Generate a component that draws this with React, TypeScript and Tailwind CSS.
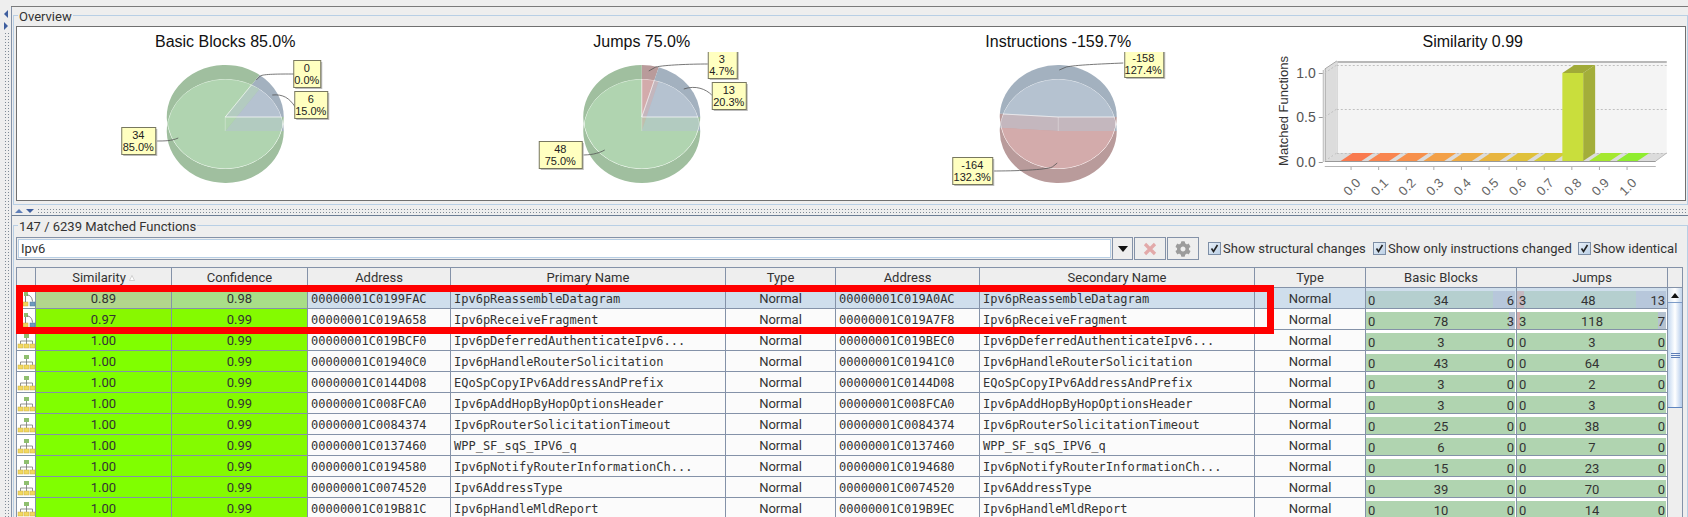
import { FaCog } from "react-icons/fa";

const SANS = "font-['Liberation_Sans',sans-serif]";

type Slice = { from: number; to: number; dark: string; pale: string };

const GREEN = { dark: "#a0bf9f", pale: "#b0d4b0" };
const BLUE = { dark: "#a3b1bf", pale: "#b5c2d0" };
const RED = { dark: "#b99b9b", pale: "#d3abab" };

const RX = 58.5;
const RY = 52;
const TOP = 117;
const BOTTOM = 131;

function wedge(cx: number, cy: number, from: number, to: number) {
  const rad = (a: number) => (a * Math.PI) / 180;
  const x0 = cx + RX * Math.cos(rad(from));
  const y0 = cy - RY * Math.sin(rad(from));
  const x1 = cx + RX * Math.cos(rad(to));
  const y1 = cy - RY * Math.sin(rad(to));
  const large = from - to > 180 ? 1 : 0;
  return `M${cx} ${cy}L${x0} ${y0}A${RX} ${RY} 0 ${large} 1 ${x1} ${y1}Z`;
}

function Note({ x, y, w, h, lines, cut }: { x: number; y: number; w: number; h: number; lines: string[]; cut?: boolean }) {
  const id = `note-${x}-${y}`;
  return (
    <g clipPath={cut ? `url(#${id})` : undefined}>
      {cut && (
        <clipPath id={id}>
          <rect x={x - 2} y={y + 3} width={w + 6} height={h + 4} />
        </clipPath>
      )}
      <rect x={x + 2} y={y + 2} width={w} height={h} fill="#bdbdbd" />
      <rect x={x + 0.5} y={y + 0.5} width={w} height={h} fill="#ffffc0" stroke="#77775f" />
      <text x={x + w / 2} y={y + 12} textAnchor="middle" className={`${SANS} fill-[#222] text-[11px]`}>
        {lines[0]}
      </text>
      <text x={x + w / 2} y={y + 24} textAnchor="middle" className={`${SANS} fill-[#222] text-[11px]`}>
        {lines[1]}
      </text>
    </g>
  );
}

function Pie({ id, cx, slices }: { id: string; cx: number; slices: Slice[] }) {
  return (
    <g>
      <clipPath id={`${id}-a`}>
        <ellipse cx={cx} cy={TOP} rx={RX} ry={RY} />
      </clipPath>
      <clipPath id={`${id}-b`}>
        <ellipse cx={cx} cy={BOTTOM} rx={RX} ry={RY} />
      </clipPath>
      {slices.map((s) => (
        <path key={`db${s.from}`} d={wedge(cx, BOTTOM, s.from, s.to)} fill={s.dark} />
      ))}
      {slices.map((s) => (
        <path key={`da${s.from}`} d={wedge(cx, TOP, s.from, s.to)} fill={s.dark} />
      ))}
      <g clipPath={`url(#${id}-a)`}>
        <g clipPath={`url(#${id}-b)`}>
          {slices.map((s) => (
            <path key={`pb${s.from}`} d={wedge(cx, BOTTOM, s.from, s.to)} fill={s.pale} />
          ))}
          {slices.map((s) => (
            <path key={`pa${s.from}`} d={wedge(cx, TOP, s.from, s.to)} fill={s.pale} fillOpacity={0.5} />
          ))}
          {slices.map((s) => (
            <path key={`la${s.from}`} d={wedge(cx, TOP, s.from, s.to)} fill="none" stroke="#fff" strokeOpacity={0.4} />
          ))}
          <line x1={cx} y1={TOP} x2={cx} y2={BOTTOM} stroke="#fff" strokeOpacity={0.3} />
          <ellipse cx={cx} cy={BOTTOM} rx={RX} ry={RY} fill="none" stroke="#fff" strokeOpacity={0.6} />
          <ellipse cx={cx} cy={TOP} rx={RX} ry={RY} fill="none" stroke="#fff" strokeOpacity={0.6} />
        </g>
      </g>
    </g>
  );
}

function ChartTitle({ x, children }: { x: number; children: string }) {
  return (
    <text x={x} y={47} textAnchor="middle" className={`${SANS} fill-[#111] text-[16px]`}>
      {children}
    </text>
  );
}

const leader = "none";

function BasicBlocksChart() {
  return (
    <svg viewBox="18 27 416.5 173" className="h-full w-full">
      <ChartTitle x={226}>Basic Blocks 85.0%</ChartTitle>
      <Pie
        id="bb"
        cx={226}
        slices={[
          { from: 54, to: 0, ...BLUE },
          { from: 0, to: -306, ...GREEN },
        ]}
      />
      <path d="M295 74C280 74 264 74 261 76L257 80" fill={leader} stroke="#555" strokeWidth={0.8} />
      <path d="M296 107C290 98 284 94 273 95" fill={leader} stroke="#555" strokeWidth={0.8} />
      <path d="M156 141C166 141 172 141 179 138" fill={leader} stroke="#555" strokeWidth={0.8} />
      <Note x={294} y={60} w={27} h={27} lines={["0", "0.0%"]} />
      <Note x={295} y={91} w={33} h={27} lines={["6", "15.0%"]} />
      <Note x={122} y={127} w={34} h={27} lines={["34", "85.0%"]} />
    </svg>
  );
}

function JumpsChart() {
  return (
    <svg viewBox="434.5 27 416.5 173" className="h-full w-full">
      <ChartTitle x={642}>Jumps 75.0%</ChartTitle>
      <Pie
        id="ju"
        cx={642}
        slices={[
          { from: 90, to: 73.1, ...RED },
          { from: 73.1, to: 0, ...BLUE },
          { from: 0, to: -270, ...GREEN },
        ]}
      />
      <path d="M708 64C690 64 665 65 656 67L649 71" fill={leader} stroke="#555" strokeWidth={0.8} />
      <path d="M712 95C706 89 696 85 684 89" fill={leader} stroke="#555" strokeWidth={0.8} />
      <path d="M582 155C590 155 598 154 605 150" fill={leader} stroke="#555" strokeWidth={0.8} />
      <Note x={708} y={49} w={29} h={29} lines={["", ""]} cut />
      <text x={722} y={63} textAnchor="middle" className={`${SANS} fill-[#222] text-[11px]`}>3</text>
      <text x={722} y={75} textAnchor="middle" className={`${SANS} fill-[#222] text-[11px]`}>4.7%</text>
      <Note x={712} y={82} w={34} h={27} lines={["13", "20.3%"]} />
      <Note x={539} y={141} w={43} h={27} lines={["48", "75.0%"]} />
    </svg>
  );
}

function InstructionsChart() {
  return (
    <svg viewBox="851 27 416.5 173" className="h-full w-full">
      <ChartTitle x={1058}>Instructions -159.7%</ChartTitle>
      <Pie
        id="in"
        cx={1058}
        slices={[
          { from: 176.5, to: 0, ...BLUE },
          { from: 0, to: -183.5, ...RED },
        ]}
      />
      <path d="M1123 63C1100 64 1075 65 1066 67L1059 70" fill={leader} stroke="#555" strokeWidth={0.8} />
      <path d="M992 171C1015 171 1045 170 1052 167L1057 163" fill={leader} stroke="#555" strokeWidth={0.8} />
      <Note x={1124} y={49} w={39} h={28} lines={["", ""]} cut />
      <text x={1143} y={62} textAnchor="middle" className={`${SANS} fill-[#222] text-[11px]`}>-158</text>
      <text x={1143} y={74} textAnchor="middle" className={`${SANS} fill-[#222] text-[11px]`}>127.4%</text>
      <Note x={952} y={157} w={40} h={27} lines={["-164", "132.3%"]} />
    </svg>
  );
}

const BAR_COLORS = ["#f97a4f", "#f9854f", "#f7904b", "#f3a047", "#eeab43", "#e8b53f", "#e0c13a", "#d4cb35", "", "#a5e82f", "#8fed2f"];
const BAR_LABELS = ["0.0", "0.1", "0.2", "0.3", "0.4", "0.5", "0.6", "0.7", "0.8", "0.9", "1.0"];

function SimilarityChart() {
  const tick = (i: number) => 1350.3 + i * 27.6;
  return (
    <svg viewBox="1267.5 27 416.5 173" className="h-full w-full">
      <ChartTitle x={1472}>Similarity 0.99</ChartTitle>
      <polygon points="1336,61 1666,61 1666,153 1336,153" fill="#f4f4f4" />
      <polygon points="1324,69 1336,61 1336,153 1324,161" fill="#dcdcdc" />
      <polygon points="1336,153 1666,153 1655,161 1324,161" fill="#dcdcdc" />
      <line x1="1336" y1="62" x2="1666" y2="62" stroke="#b8b8b8" strokeWidth="2" />
      <line x1="1336.5" y1="61" x2="1336.5" y2="153" stroke="#cfcfcf" />
      <line x1="1324" y1="69" x2="1336" y2="61" stroke="#aaa" />
      <line x1="1324" y1="161.5" x2="1655" y2="161.5" stroke="#999" />
      <line x1="1324.5" y1="69" x2="1324.5" y2="161" stroke="#aaa" />
      <line x1="1666" y1="153" x2="1655" y2="161" stroke="#bbb" />
      {[65, 109, 153].map((y) => (
        <g key={y}>
          <line x1="1336" y1={y + 0.5} x2="1666" y2={y + 0.5} stroke="#c0c0c0" strokeDasharray="2 2" />
          <line x1="1324" y1={y + 8} x2="1336" y2={y} stroke="#c0c0c0" strokeDasharray="2 2" />
        </g>
      ))}
      <line x1="1322.5" y1="70" x2="1322.5" y2="162" stroke="#b5b5b5" />
      <line x1="1324" y1="166.5" x2="1655" y2="166.5" stroke="#b5b5b5" />
      {[
        ["1.0", 73],
        ["0.5", 117],
        ["0.0", 162],
      ].map(([label, y]) => (
        <g key={label}>
          <line x1="1318" y1={Number(y) + 0.5} x2="1322" y2={Number(y) + 0.5} stroke="#999" />
          <text x={1315} y={Number(y) + 5} textAnchor="end" className={`${SANS} fill-[#555] text-[14px]`}>
            {label}
          </text>
        </g>
      ))}
      <text
        transform="translate(1287 111) rotate(-90)"
        textAnchor="middle"
        className={`${SANS} fill-[#333] text-[13px]`}
      >
        Matched Functions
      </text>
      {BAR_COLORS.map((color, i) => {
        const c = tick(i);
        if (!color) return null;
        return (
          <polygon
            key={i}
            points={`${c - 10.4},161 ${c + 10.4},161 ${c + 22.4},153 ${c + 1.6},153`}
            fill={color}
          />
        );
      })}
      <polygon points="1582.4,73 1594.4,65 1594.4,153 1582.4,161" fill="#a3ae3a" />
      <polygon points="1561.6,73 1582.4,73 1594.4,65 1573.6,65" fill="#a0aa38" />
      <rect x="1561.6" y="73" width="20.8" height="88" fill="#c9de3c" />
      {BAR_LABELS.map((label, i) => (
        <g key={label}>
          <line x1={tick(i)} y1="167" x2={tick(i)} y2="170" stroke="#aaa" />
          <text
            transform={`translate(${tick(i) + 4} 190) rotate(-45)`}
            textAnchor="middle"
            className={`${SANS} fill-[#666] text-[13px]`}
          >
            {label}
          </text>
        </g>
      ))}
    </svg>
  );
}

type Triple = [number, number, number];
type Row = { sim: string; conf: string; a1: string; n1: string; a2: string; n2: string; bb: Triple; ju: Triple };

const full = (sim: string, a1: string, n1: string, a2: string, n2: string, bb: number, ju: number): Row => ({
  sim,
  conf: "0.99",
  a1,
  n1,
  a2,
  n2,
  bb: [0, bb, 0],
  ju: [0, ju, 0],
});

const ROWS: Row[] = [
  {
    sim: "0.89",
    conf: "0.98",
    a1: "00000001C0199FAC",
    n1: "Ipv6pReassembleDatagram",
    a2: "00000001C019A0AC",
    n2: "Ipv6pReassembleDatagram",
    bb: [0, 34, 6],
    ju: [3, 48, 13],
  },
  {
    sim: "0.97",
    conf: "0.99",
    a1: "00000001C019A658",
    n1: "Ipv6pReceiveFragment",
    a2: "00000001C019A7F8",
    n2: "Ipv6pReceiveFragment",
    bb: [0, 78, 3],
    ju: [3, 118, 7],
  },
  full("1.00", "00000001C019BCF0", "Ipv6pDeferredAuthenticateIpv6...", "00000001C019BEC0", "Ipv6pDeferredAuthenticateIpv6...", 3, 3),
  full("1.00", "00000001C01940C0", "Ipv6pHandleRouterSolicitation", "00000001C01941C0", "Ipv6pHandleRouterSolicitation", 43, 64),
  full("1.00", "00000001C0144D08", "EQoSpCopyIPv6AddressAndPrefix", "00000001C0144D08", "EQoSpCopyIPv6AddressAndPrefix", 3, 2),
  full("1.00", "00000001C008FCA0", "Ipv6pAddHopByHopOptionsHeader", "00000001C008FCA0", "Ipv6pAddHopByHopOptionsHeader", 3, 3),
  full("1.00", "00000001C0084374", "Ipv6pRouterSolicitationTimeout", "00000001C0084374", "Ipv6pRouterSolicitationTimeout", 25, 38),
  full("1.00", "00000001C0137460", "WPP_SF_sqS_IPV6_q", "00000001C0137460", "WPP_SF_sqS_IPV6_q", 6, 7),
  full("1.00", "00000001C0194580", "Ipv6pNotifyRouterInformationCh...", "00000001C0194680", "Ipv6pNotifyRouterInformationCh...", 15, 23),
  full("1.00", "00000001C0074520", "Ipv6AddressType", "00000001C0074520", "Ipv6AddressType", 39, 70),
  full("1.00", "00000001C019B81C", "Ipv6pHandleMldReport", "00000001C019B9EC", "Ipv6pHandleMldReport", 10, 14),
];

function RowIcon({ changed }: { changed: boolean }) {
  if (changed) {
    return (
      <svg width="19" height="20" viewBox="0 0 19 20">
        <rect x="7" y="4" width="4" height="4" fill="#8fbf6f" />
        <rect x="6" y="14" width="5" height="4" fill="#f2d35c" stroke="#c9a93a" strokeWidth="0.5" />
        <rect x="13" y="14" width="5" height="4" fill="#6f9bbf" stroke="#4f7898" strokeWidth="0.5" />
        <path d="M8.5 8V14M10 7C13 7 15 9 15.5 13.5" fill="none" stroke="#666" strokeWidth="0.8" />
      </svg>
    );
  }
  return (
    <svg width="19" height="20" viewBox="0 0 19 20">
      <rect x="7" y="4" width="5" height="4" fill="#8fbf6f" />
      <path d="M9.5 8V14M3.5 14V11H15.5V14" fill="none" stroke="#777" strokeWidth="0.8" />
      {[1, 7, 13].map((x) => (
        <rect key={x} x={x} y="14" width="5" height="4" fill="#f2d860" stroke="#cbb143" strokeWidth="0.5" />
      ))}
    </svg>
  );
}

function BarCell({ values, selected, width }: { values: Triple; selected: boolean; width: string }) {
  const total = values[0] + values[1] + values[2];
  return (
    <div className={`relative h-full shrink-0 border-r border-[#8492a8] pt-[3px] ${width} ${selected ? "bg-[#cfdeec]" : "bg-white"}`}>
      <div className="absolute inset-x-0 top-[3px] bottom-0 flex overflow-hidden pr-px">
        <div className={selected ? "bg-[#c4b8c0]" : "bg-[#d3abab]"} style={{ width: `${(values[0] / total) * 100}%` }} />
        <div className={`flex-1 ${selected ? "bg-[#b5cfcf]" : "bg-[#b0d4b0]"}`} />
        <div className={selected ? "bg-[#b7c7db]" : "bg-[#b5c2d0]"} style={{ width: `${(values[2] / total) * 100}%` }} />
      </div>
      <div className="relative flex items-center justify-between px-[2px] leading-[20px]">
        <span>{values[0]}</span>
        <span>{values[1]}</span>
        <span>{values[2]}</span>
      </div>
    </div>
  );
}

const HEADERS: [string, string][] = [
  ["", "w-[19px]"],
  ["Similarity", "w-[136px]"],
  ["Confidence", "w-[136px]"],
  ["Address", "w-[143px]"],
  ["Primary Name", "w-[275px]"],
  ["Type", "w-[110px]"],
  ["Address", "w-[144px]"],
  ["Secondary Name", "w-[275px]"],
  ["Type", "w-[111px]"],
  ["Basic Blocks", "w-[151px]"],
  ["Jumps", "w-[151px]"],
];

function TableRow({ row, index }: { row: Row; index: number }) {
  const selected = index === 0;
  const plain = selected ? "bg-[#cfdeec]" : "bg-[#fbfbfb]";
  const simBg = selected ? "bg-[#b2d68c]" : index === 1 ? "bg-[#88f800]" : "bg-[#80ff00]";
  const confBg = selected ? "bg-[#a8de88]" : "bg-[#84fb00]";
  const mono = "shrink-0 truncate border-r border-[#8492a8] px-[3px] font-['DejaVu_Sans_Mono',monospace] text-[12px] leading-[22px]";
  const center = "shrink-0 border-r border-[#8492a8] text-center leading-[22px]";
  return (
    <div className="flex h-[21px] border-b border-[#8492a8]">
      <div className="w-[19px] shrink-0 border-r border-[#8492a8] bg-white">
        <RowIcon changed={index < 2} />
      </div>
      <div className={`w-[136px] ${center} ${simBg}`}>{row.sim}</div>
      <div className={`w-[136px] ${center} ${confBg}`}>{row.conf}</div>
      <div className={`w-[143px] ${mono} ${plain}`}>{row.a1}</div>
      <div className={`w-[275px] ${mono} ${plain}`}>{row.n1}</div>
      <div className={`w-[110px] ${center} ${plain}`}>Normal</div>
      <div className={`w-[144px] ${mono} ${plain}`}>{row.a2}</div>
      <div className={`w-[275px] ${mono} ${plain}`}>{row.n2}</div>
      <div className={`w-[111px] ${center} ${plain}`}>Normal</div>
      <BarCell values={row.bb} selected={selected} width="w-[151px]" />
      <BarCell values={row.ju} selected={selected} width="w-[151px]" />
    </div>
  );
}

function Check({ label, className }: { label: string; className: string }) {
  return (
    <div className={`flex items-center gap-[2px] ${className}`}>
      <span className="flex h-[13px] w-[13px] items-center justify-center border border-[#7d8ea6] bg-gradient-to-br from-[#e8f0f8] to-[#bcd0e6]">
        <svg width="9" height="9" viewBox="0 0 9 9">
          <path d="M1.5 4.5L3.5 7.5L7.5 1" fill="none" stroke="#222" strokeWidth="1.6" />
        </svg>
      </span>
      <span className="whitespace-nowrap">{label}</span>
    </div>
  );
}

function Scrollbar() {
  return (
    <div className="flex w-[15px] shrink-0 flex-col border-r border-[#8492a8] bg-[#eeeeee]">
      <div className="h-[21px] border-y border-[#8492a8]" />
      <div className="flex h-[15px] items-center justify-center border-b border-[#7d9cc8] bg-gradient-to-r from-[#dbe6f2] via-white to-[#c3d5ea]">
        <svg width="8" height="5" viewBox="0 0 8 5">
          <path d="M0 5L4 0L8 5Z" fill="#111" />
        </svg>
      </div>
      <div className="flex h-[105px] items-center justify-center border-b border-[#5f86c0] bg-gradient-to-r from-[#c4d8f0] via-white to-[#b4cbea]">
        <div className="h-[5px] w-[9px] border-y border-[#5f7fb8] bg-[linear-gradient(#5f7fb8,#5f7fb8)] bg-[length:100%_1px] bg-center bg-no-repeat" />
      </div>
    </div>
  );
}

const DOTS = "bg-[radial-gradient(#7f8a96_0.7px,transparent_0.9px)] bg-[length:3px_3px]";

export default function App() {
  return (
    <div className="flex h-[517px] w-[1688px] overflow-hidden bg-[#eeeeee] font-['Roboto',sans-serif] text-[13px] text-[#333]">
      {/* left collapse strip */}
      <div className="w-[11px] shrink-0 pt-[8px]">
        <div className={`ml-[4px] flex h-full w-[6px] flex-col gap-[4px] ${DOTS}`}>
          <svg width="6" height="24" viewBox="0 0 6 24" className="-ml-px bg-[#eeeeee]">
            <path d="M5 2L1 6L5 10Z" fill="#3f5f9f" />
            <path d="M1 14L5 18L1 22Z" fill="#3f5f9f" />
          </svg>
        </div>
      </div>

      <div className="flex min-w-0 flex-1 flex-col">
        <div className="h-[7px] shrink-0 border-b border-[#7a7a7a]" />
        <div className="flex min-h-0 flex-1 flex-col border-l border-[#8492a8]">
          {/* overview panel */}
          <div className="relative mt-[8px] ml-[1px] h-[190px] shrink-0 border border-[#b8cfe5] pt-[10px] pr-[1px] pb-[2px] pl-[2px]">
            <span className="absolute -top-[8px] left-[4px] bg-[#eeeeee] px-[1px] leading-[17px]">Overview</span>
            <div className="grid h-[175px] grid-cols-4 border border-[#707070] bg-white">
              <BasicBlocksChart />
              <JumpsChart />
              <InstructionsChart />
              <SimilarityChart />
            </div>
          </div>

          {/* splitter */}
          <div className="flex h-[11px] shrink-0 items-center border-b border-[#6d7f96] pt-[2px]">
            <svg width="22" height="6" viewBox="0 0 22 6" className="ml-[3px] shrink-0">
              <path d="M0 5L4 1L8 5Z" fill="#5f7fb8" />
              <path d="M11 1L19 1L15 5Z" fill="#3f5f9f" />
            </svg>
            <div className={`h-[6px] flex-1 ${DOTS}`} />
          </div>

          {/* matched functions panel */}
          <div className="relative mt-[9px] ml-[1px] flex-1 border border-[#b8cfe5] pt-[11px] pr-[4px] pl-[2px]">
            <span className="absolute -top-[8px] left-[4px] bg-[#eeeeee] px-[1px] leading-[17px]">147 / 6239 Matched Functions</span>

            <div className="flex h-[23px] items-center">
              <div className="h-full w-[1097px] shrink-0 border border-[#8492a8] p-px">
                <div className="h-full border border-[#b8cfe5] bg-white pl-[2px] leading-[17px]">Ipv6</div>
              </div>
              <div className="flex h-full w-[20px] shrink-0 items-center justify-center border-y border-r border-[#8492a8]">
                <svg width="10" height="6" viewBox="0 0 10 6">
                  <path d="M0 0H10L5 6Z" fill="#111" />
                </svg>
              </div>
              <div className="ml-px flex h-full w-[32px] shrink-0 items-center justify-center border border-[#8492a8]">
                <svg width="14" height="14" viewBox="0 0 14 14">
                  <path d="M2 2L12 12M12 2L2 12" stroke="#e2a9a9" strokeWidth="3.2" />
                </svg>
              </div>
              <div className="ml-px flex h-full w-[32px] shrink-0 items-center justify-center border border-[#8492a8]">
                <FaCog className="text-[16px] text-[#9c9c9c]" />
              </div>
              <Check label="Show structural changes" className="ml-[9px] w-[165px] shrink-0" />
              <Check label="Show only instructions changed" className="w-[205px] shrink-0" />
              <Check label="Show identical" className="shrink-0" />
            </div>

            <div className="relative mt-[7px] flex">
              <div className="w-[1652px] shrink-0 border-l border-[#8492a8]">
                <div className="flex h-[21px] border-y border-[#8492a8]">
                  {HEADERS.map(([label, width], i) => (
                    <div key={i} className={`flex shrink-0 items-center justify-center gap-[3px] border-r border-[#8492a8] leading-[19px] ${width}`}>
                      {label}
                      {label === "Similarity" && (
                        <svg width="6" height="6" viewBox="0 0 6 6">
                          <path d="M3 0.5L5.5 5.5H0.5Z" fill="#fff" stroke="#bbb" strokeWidth="0.6" />
                        </svg>
                      )}
                    </div>
                  ))}
                </div>
                {ROWS.map((row, i) => (
                  <TableRow key={i} row={row} index={i} />
                ))}
              </div>
              <Scrollbar />
              {/* red highlight drawn over the screenshot */}
              <div className="absolute top-[18px] left-0 h-[49px] w-[1258px] border-[7px] border-[#ff0000]" />
            </div>
          </div>
        </div>
      </div>
    </div>
  );
}
